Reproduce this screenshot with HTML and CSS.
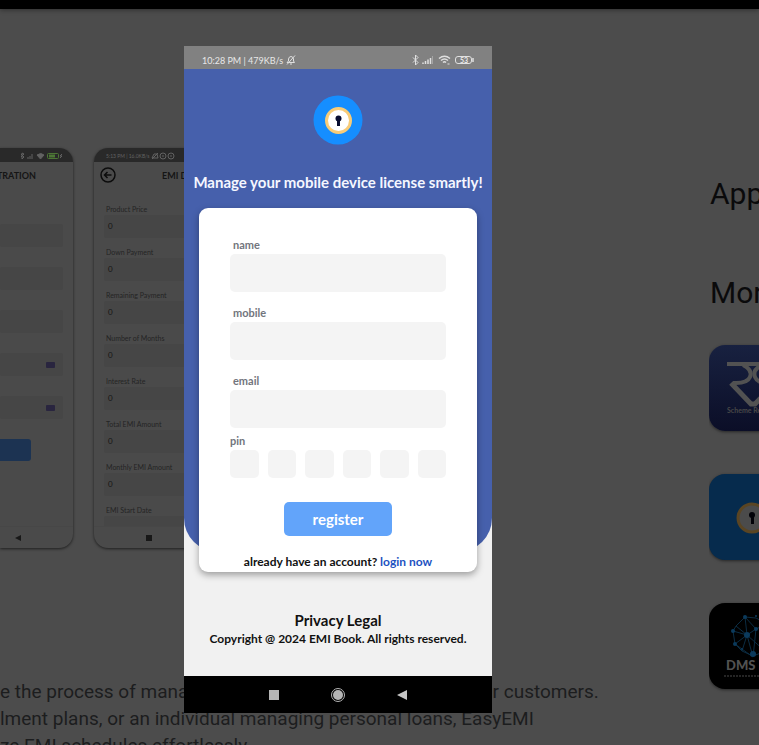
FILE: index.html
```html
<!DOCTYPE html>
<html lang="en">
<head>
<meta charset="utf-8">
<meta name="viewport" content="width=device-width, initial-scale=1">
<title>EMI Book</title>
<link rel="stylesheet" href="styles.css">
</head>
<body>
<div class="topbar"></div>
<div class="page">
  <main class="content">
    <div class="gallery">
      <div class="shot shot-cut">
        <div class="shot-status shot-status-end">
          <svg width="43" height="8" viewBox="0 0 43 8" fill="none" stroke="#626262"><path d="M1 2l3 3-2 2V1l2 1-3 3"/><path d="M8 7V5M10 7V4M12 7V2" /><path d="M17 3q4-3 7 0l-3.500 4z" fill="#626262"/><rect x="27.500" y="1.500" width="11" height="5" rx="1" stroke="#4c7635"/><path d="M29 4h6" stroke="#4c7635" stroke-width="3"/><path d="M42 2l-2 2h2l-2 2"/></svg>
        </div>
        <div class="shot-title shot-title-end">TRATION</div>
        <div class="cut-fields">
          <div class="shot-field"></div>
          <div class="shot-field"></div>
          <div class="shot-field"></div>
          <div class="shot-field"><span class="calendar"></span></div>
          <div class="shot-field"><span class="calendar"></span></div>
        </div>
        <div class="shot-button"></div>
        <div class="shot-nav cut-nav"><svg width="6" height="6" viewBox="0 0 6 6"><path d="M6 0v6L0 3z" fill="#181818"/></svg></div>
      </div>
      <div class="shot">
        <div class="shot-status">5:13 PM | 16.0KB/s
          <svg width="24" height="8" viewBox="0 0 24 8" fill="none" stroke="#626262"><path d="M1 6h6L6 2H3zM1 7l6-6"/><circle cx="12" cy="4" r="3"/><path d="M11 4h2"/><circle cx="20" cy="4" r="3"/><path d="M19 4h2"/></svg>
        </div>
        <div class="shot-title">
          <svg class="back" width="16" height="16" viewBox="0 0 16 16" fill="none" stroke="#0c0c0c"><circle cx="8" cy="8" r="7" stroke-width="1.500"/><path d="M11.500 8h-7M7.500 5l-3 3 3 3" stroke-width="1.500"/></svg>
          EMI D
        </div>
        <div class="shot-fields">
          <div class="shot-label">Product Price</div><div class="shot-field">0</div>
          <div class="shot-label">Down Payment</div><div class="shot-field">0</div>
          <div class="shot-label">Remaining Payment</div><div class="shot-field">0</div>
          <div class="shot-label">Number of Months</div><div class="shot-field">0</div>
          <div class="shot-label">Interest Rate</div><div class="shot-field">0</div>
          <div class="shot-label">Total EMI Amount</div><div class="shot-field">0</div>
          <div class="shot-label">Monthly EMI Amount</div><div class="shot-field">0</div>
          <div class="shot-label">EMI Start Date</div><div class="shot-field"></div>
        </div>
        <div class="shot-nav"><svg width="6" height="6" viewBox="0 0 6 6"><path d="M0 0h6v6H0z" fill="#181818"/></svg></div>
      </div>
    </div>
    <p class="description">e the process of managing leases and installments for your customers.<br>lment plans, or an individual managing personal loans, EasyEMI<br>ze EMI schedules effortlessly.</p>
  </main>
  <aside class="side">
    <h2>App support</h2>
    <h2 class="more">More by</h2>
    <a class="app app-scheme" href="#" aria-label="Scheme">
      <svg width="86" height="86" viewBox="0 0 86 86" fill="none" stroke="#525252" stroke-width="4"><path d="M18 19h50"/><path d="M34 20c6 3 9 7 7 12-2 5-7 6-14 6h-3"/><path d="M53 20c-6 3-9 7-7 12 2 5 6 6 11 6"/><path d="M22 38l20 21h4l20-21" stroke-width="5"/><text x="18" y="68" fill="#484848" stroke="none" class="tiny">Scheme Registry</text></svg>
    </a>
    <a class="app app-lock" href="#" aria-label="EMI Book">
      <svg width="86" height="86" viewBox="0 0 86 86"><circle cx="43" cy="44" r="14" fill="#4b4b4b" stroke="#5a4523" stroke-width="3"/><circle cx="43" cy="41" r="3" fill="#020208"/><path d="M42 41h3v9h-3z" fill="#020208"/></svg>
    </a>
    <a class="app app-dms" href="#" aria-label="DMS">
      <svg width="86" height="86" viewBox="0 0 86 86" fill="none" stroke="#0b2c42"><path d="M36 14l-9 9-3 5 2 13 7 7 11 5 13-5 6-12-5-15-11-6zM24 28l14 4 6 22M26 41l12-9 9-6-11-12M27 23l11 9-5 16M38 32l19 17M47 26l11-5M38 32l-2-18M26 41l18 13 3-28"/><g fill="#0b3a5c" stroke="none"><circle cx="36" cy="14" r="2"/><circle cx="24" cy="28" r="2"/><circle cx="26" cy="41" r="2"/><circle cx="38" cy="32" r="3"/><circle cx="44" cy="51" r="3"/><circle cx="47" cy="26" r="2"/><circle cx="33" cy="46" r="1"/><circle cx="47" cy="13" r="1"/></g><text x="17" y="67" fill="#525252" stroke="none" class="brand">DMS Pro</text><path d="M15 73h56" stroke="#252525" stroke-width="2" stroke-dasharray="2 1"/></svg>
    </a>
  </aside>
</div>

<div class="overlay">
  <div class="dialog" role="dialog" aria-label="Register">
    <div class="status">
      <span class="status-left">10:28 PM | 479KB/s
        <svg width="10" height="10" viewBox="0 0 10 10" fill="none" stroke="#dedede"><path d="M1 7.500h7.500L7.500 6V4Q7 1.500 5 1.500T2.500 4v2zM4 9h2M1 9.500L9 .5"/></svg>
      </span>
      <svg width="62" height="12" viewBox="0 0 62 12" fill="none" stroke="#e0e0e0"><path d="M1 3.500l5 5L3.500 11V1L6 3.500l-5 5"/><path d="M11 10V8.500M13.500 10V7M16 10V5.500M18.500 10V4" stroke-width="1.500"/><path d="M20.500 10V2" stroke="#a5a5a5"/><path d="M27 4.500q5.500-4.500 11 0M29 6.500q3.500-3 7 0M31 8.500q1.500-1.500 3 0" stroke-width="1.500"/><path d="M35.500 10h2" /><rect x="43.500" y="2.500" width="16" height="7" rx="2.500"/><path d="M61 4v4" stroke-width="1.500"/><text x="48" y="9" fill="#ededed" stroke="none" class="battery">53</text></svg>
    </div>
    <form class="hero">
      <svg class="logo" width="50" height="50" viewBox="0 0 50 50"><circle cx="25" cy="25" r="24.500" fill="#158eff"/><circle cx="25.500" cy="25.500" r="12" fill="#fff" stroke="#f8cc78" stroke-width="3"/><circle cx="25.500" cy="23.500" r="3" fill="#080d30"/><path d="M24 24h3v7h-3z" fill="#080d30"/></svg>
      <h1>Manage your mobile device license smartly!</h1>
      <div class="card">
        <div class="field"><label for="name">name</label><input id="name" type="text"></div>
        <div class="field"><label for="mobile">mobile</label><input id="mobile" type="tel"></div>
        <div class="field"><label for="email">email</label><input id="email" type="email"></div>
        <label class="pin-label" for="pin1">pin</label>
        <div class="pins">
          <input id="pin1" aria-label="pin digit 1" maxlength="1">
          <input aria-label="pin digit 2" maxlength="1">
          <input aria-label="pin digit 3" maxlength="1">
          <input aria-label="pin digit 4" maxlength="1">
          <input aria-label="pin digit 5" maxlength="1">
          <input aria-label="pin digit 6" maxlength="1">
        </div>
        <button class="register" type="button">register</button>
        <p class="login">already have an account? <a href="#">login now</a></p>
      </div>
    </form>
    <footer class="legal">
      <p class="legal-title">Privacy Legal</p>
      <p class="copyright">Copyright @ 2024 EMI Book. All rights reserved.</p>
    </footer>
    <div class="nav">
      <svg width="10" height="10" viewBox="0 0 10 10"><path d="M0 0h10v10H0z" fill="#b5b5b5"/></svg>
      <svg width="16" height="16" viewBox="0 0 16 16"><circle cx="8" cy="8" r="6.500" fill="none" stroke="#b5b5b5"/><circle cx="8" cy="8" r="5" fill="#b5b5b5"/></svg>
      <svg width="10" height="10" viewBox="0 0 10 10"><path d="M10 0v10L0 5z" fill="#c5c5c5"/></svg>
    </div>
  </div>
</div>
</body>
</html>
```
FILE: styles.css
```css
* { box-sizing: border-box; }
body { margin: 0; height: 100vh; overflow: hidden; background: #4c4c4c; font-family: Roboto, sans-serif; }
p, h1, h2 { margin: 0; }
svg { display: block; flex: none; }

.topbar { height: 9px; background: #000; box-shadow: 0 1px 5px rgba(0, 0, 0, .4); }
.page { display: grid; grid-template-columns: minmax(0, 1fr) 50px; }
.content { padding-top: 139px; }
.gallery { display: flex; gap: 21px; }

.shot { width: 180px; height: 400px; display: flex; flex-direction: column; overflow: hidden; border-radius: 14px; background: #4a4a4a; box-shadow: 0 1px 3px rgba(0, 0, 0, .6); color: #151515; font-family: Lato, sans-serif; }
.shot-cut { width: 73px; border-radius: 0 14px 14px 0; }
.shot-status { flex: none; height: 14px; display: flex; align-items: center; gap: 2px; padding: 2px 10px 0 12px; background: #292929; color: #626262; font-size: 5px; white-space: nowrap; }
.shot-status-end { justify-content: flex-end; }
.shot-title { flex: none; height: 26px; display: flex; align-items: center; gap: 46px; padding-left: 6px; font-size: 9px; font-weight: 700; white-space: nowrap; }
.shot-title-end { justify-content: flex-end; padding-right: 37px; }
.shot-fields { flex: 1; min-height: 0; overflow: hidden; padding: 15px 10px 0; }
.shot-label { height: 12px; margin-left: 2px; line-height: 12px; font-size: 7px; color: #242424; }
.shot-field { height: 23px; margin-bottom: 8px; padding-left: 4px; line-height: 23px; font-size: 8px; background: #464646; border-radius: 2px; }
.shot-nav { flex: none; height: 22px; display: flex; align-items: center; padding-left: 52px; border-top: 1px solid #474747; }
.cut-fields { display: grid; gap: 20px; padding: 36px 10px 0 0; }
.cut-fields .shot-field { margin: 0; display: flex; align-items: center; justify-content: flex-end; padding-right: 8px; }
.calendar { width: 9px; height: 6px; background: #29253f; border-radius: 1px; }
.shot-button { width: 31px; height: 22px; margin-top: 20px; background: #1c3352; border-radius: 0 3px 3px 0; }
.cut-nav { margin-top: auto; padding-left: 15px; }

.description { margin-top: 130px; font-size: 19px; line-height: 27px; color: #1c1d1e; white-space: nowrap; }

.side { padding-top: 167px; overflow: hidden; white-space: nowrap; }
.side h2 { margin-left: 1px; font: 400 30px/36px Roboto, sans-serif; color: #0a0a0b; }
.side .more { margin-top: 63px; margin-bottom: 34px; }
.app { display: block; width: 86px; height: 86px; margin-bottom: 43px; border-radius: 16px; overflow: hidden; box-shadow: 0 1px 3px rgba(0, 0, 0, .5); }
.app-scheme { background: linear-gradient(#182140, #0b0e27); }
.app-lock { background: #062b4d; }
.app-dms { background: #000; }
.tiny { font: 700 7px Lato, sans-serif; }
.brand { font: 900 13px Lato, sans-serif; }

.overlay { position: fixed; inset: 0; display: grid; grid-template-columns: 184fr 308fr 267fr; align-items: start; padding-top: 46px; }
.dialog { grid-column: 2; background: #f1f1f1; font-family: Lato, sans-serif; color: #111; }
.status { height: 23px; display: flex; align-items: center; justify-content: space-between; padding: 5px 18px 0; background: #818181; color: #e8e8e8; font-size: 9px; }
.status-left { display: flex; align-items: center; gap: 3px; }
.battery { font: 700 7px Lato, sans-serif; }
.hero { display: flow-root; padding: 26px 15px 0; border-radius: 0 0 34px 34px; background: #4660ac; }
.logo { margin: 0 auto; }
.hero h1 { margin: 27px -15px 16px; font-size: 15px; line-height: 20px; font-weight: 700; text-align: center; white-space: nowrap; color: #f5f7ff; }
.card { display: flex; flex-direction: column; margin-bottom: -20px; padding: 29px 31px 2px; background: #fff; border-radius: 9px; box-shadow: 0 3px 7px rgba(0, 0, 0, .35); }
.field { display: grid; gap: 1px; margin-bottom: 13px; }
.field label { padding-left: 3px; }
.card label { font-size: 11px; line-height: 16px; font-weight: 700; color: #72757d; }
.card input { width: 100%; min-width: 0; border: 0; border-radius: 5px; background: #f4f4f4; padding: 0 8px; outline: 0; }
.field input { height: 38px; }
.card .pin-label { margin-top: -8px; }
.pins { display: grid; grid-template-columns: repeat(6, 1fr); gap: 9px; margin-top: 1px; }
.pins input { height: 28px; }
.register { align-self: center; width: 50%; height: 34px; margin-top: 24px; padding: 0; border: 0; border-radius: 5px; background: #62a4fa; color: #fff; font: 700 15px Lato, sans-serif; }
.login { margin: 18px -20px 0; font-size: 12px; line-height: 16px; font-weight: 700; text-align: center; white-space: nowrap; }
.login a { color: #1d52c1; text-decoration: none; }
.legal { padding: 58px 0 28px; text-align: center; font-weight: 700; }
.legal-title { font-size: 15px; line-height: 20px; }
.copyright { font-size: 12px; line-height: 18px; white-space: nowrap; }
.nav { height: 37px; display: flex; align-items: center; justify-content: center; gap: 51px; background: #000; }
```
